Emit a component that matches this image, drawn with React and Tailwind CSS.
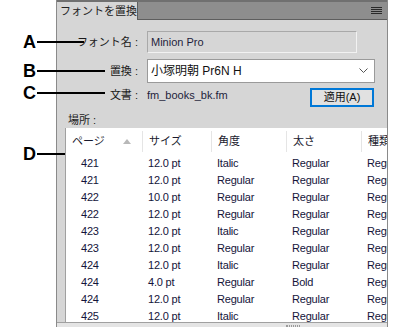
import React from "react";

const rows = [
  ["421", "12.0 pt", "Italic", "Regular", "Regular"],
  ["421", "12.0 pt", "Regular", "Regular", "Regular"],
  ["422", "10.0 pt", "Regular", "Regular", "Regular"],
  ["422", "12.0 pt", "Regular", "Regular", "Regular"],
  ["423", "12.0 pt", "Italic", "Regular", "Regular"],
  ["423", "12.0 pt", "Regular", "Regular", "Regular"],
  ["424", "12.0 pt", "Italic", "Regular", "Regular"],
  ["424", "4.0 pt", "Regular", "Bold", "Regular"],
  ["424", "12.0 pt", "Regular", "Regular", "Regular"],
  ["425", "12.0 pt", "Italic", "Regular", "Regular"],
];

const headers = ["ページ", "サイズ", "角度", "太さ", "種類"];
const widths = ["w-[76px]", "w-[69px]", "w-[75px]", "w-[75px]", "w-[75px]"];

const Callout = ({ letter, top, line }) => (
  <div className={`absolute left-[23px] ${top} flex items-center`}>
    <span className="w-[14px] text-[18px] leading-[18px] font-bold text-black">{letter}</span>
    <span className={`h-[2px] ${line} bg-black`} />
  </div>
);

const App = () => {
  return (
    <div
      className="relative w-[400px] h-[327px] bg-white overflow-hidden text-[#1a1a2e]"
      style={{ fontFamily: '"Liberation Sans", "Noto Sans CJK JP", sans-serif' }}
    >
      <div className="ml-[56px] w-[332px] h-full bg-[#d6d6d6] border-l border-r border-[#8a8a8a] flex flex-col">
        {/* panel header */}
        <div className="h-[20px] flex bg-[#8e8e8e] border-t-2 border-[#707070]">
          <div className="w-[81px] bg-[#d6d6d6] border-r border-[#5e5e5e] text-[11px] leading-[18px] pl-[3px] text-[#222]">
            フォントを置換
          </div>
          <div className="flex-1 flex items-center justify-end pr-[5px] border-b border-[#5e5e5e]">
            <div className="flex flex-col gap-[1px] w-[11px]">
              <span className="h-[1px] bg-[#2a2a2a]" />
              <span className="h-[1px] bg-[#2a2a2a]" />
              <span className="h-[1px] bg-[#2a2a2a]" />
              <span className="h-[1px] bg-[#2a2a2a]" />
            </div>
          </div>
        </div>

        {/* form */}
        <div className="mt-[11px] h-[22px] flex items-center">
          <span className="w-[81px] text-right text-[11px] text-[#1a1a1a]">フォント名 :</span>
          <div className="ml-[9px] w-[210px] h-full border border-t-[#a9a9a9] border-l-[#a9a9a9] border-b-[#f2f2f2] border-r-[#f2f2f2] flex items-center pl-[3px] text-[11px] text-[#1e1e3c]">
            Minion Pro
          </div>
        </div>
        <div className="mt-[6px] h-[24px] flex items-center">
          <span className="w-[81px] text-right text-[11px] text-[#1a1a1a]">置換 :</span>
          <div className="ml-[9px] w-[228px] h-full bg-white border border-[#9a9a9a] flex items-center pl-[3px] pr-[6px] text-[12px] text-[#111]">
            <span>小塚明朝 Pr6N H</span>
            <svg className="ml-auto" width="9" height="6" viewBox="0 0 9 6">
              <path d="M0.5 0.5 L4.5 4.5 L8.5 0.5" fill="none" stroke="#555" strokeWidth="1" />
            </svg>
          </div>
        </div>
        <div className="mt-[5px] h-[18px] flex">
          <span className="w-[81px] text-right text-[11px] leading-[14px] text-[#1a1a1a]">文書 :</span>
          <span className="ml-[9px] text-[11px] leading-[14px] text-[#1e1e3c]">fm_books_bk.fm</span>
          <button className="ml-auto mr-[13px] w-[64px] h-[19px] border-2 border-[#0078d7] bg-[#e1e1e1] text-[11px] leading-[15px] text-[#111]">
            適用(A)
          </button>
        </div>

        <div className="mt-[7px] h-[14px] pl-[11px] text-[11px] leading-[14px] text-[#1a1a1a]">場所 :</div>

        {/* table */}
        <div className="mt-[1px] ml-[8px] h-[194px] bg-white border-l border-[#a0a0a0] overflow-hidden">
          <div className="flex h-[27px] items-center">
            {headers.map((h, i) => (
              <div
                key={h}
                className={`${widths[i]} shrink-0 h-[21px] flex items-center pl-[6px] text-[11px] whitespace-nowrap ${i > 0 ? "border-l border-[#e5e5e5]" : ""}`}
              >
                {h}
                {i === 0 && (
                  <svg className="ml-[18px]" width="8" height="5" viewBox="0 0 8 5">
                    <path d="M0 5 L4 0 L8 5 Z" fill="#b8b8b8" />
                  </svg>
                )}
              </div>
            ))}
          </div>
          {rows.map((r, idx) => (
            <div key={idx} className="flex h-[17px] items-center text-[11px] tracking-[-0.2px] text-[#14143a]">
              <div className="w-[76px] shrink-0 pl-[15px]">{r[0]}</div>
              <div className="w-[69px] shrink-0 pl-[6px]">{r[1]}</div>
              <div className="w-[75px] shrink-0 pl-[6px]">{r[2]}</div>
              <div className="w-[75px] shrink-0 pl-[6px]">{r[3]}</div>
              <div className="w-[75px] shrink-0 pl-[6px]">{r[4]}</div>
            </div>
          ))}
        </div>

        {/* bottom scrollbar strip */}
        <div className="flex-1 border-t border-[#a0a0a0] bg-[#e4e4e4] flex items-start pl-[229px] pt-[2px]">
          <span className="w-[14px] h-[2px] border-l border-r border-[#9a9a9a] bg-[repeating-linear-gradient(90deg,#9a9a9a_0,#9a9a9a_1px,transparent_1px,transparent_2px)]" />
        </div>
      </div>

      <Callout letter="A" top="top-[33px]" line="w-[47px]" />
      <Callout letter="B" top="top-[62px]" line="w-[68px]" />
      <Callout letter="C" top="top-[84px]" line="w-[68px]" />
      <Callout letter="D" top="top-[145px]" line="w-[28px]" />
    </div>
  );
};

export default App;
